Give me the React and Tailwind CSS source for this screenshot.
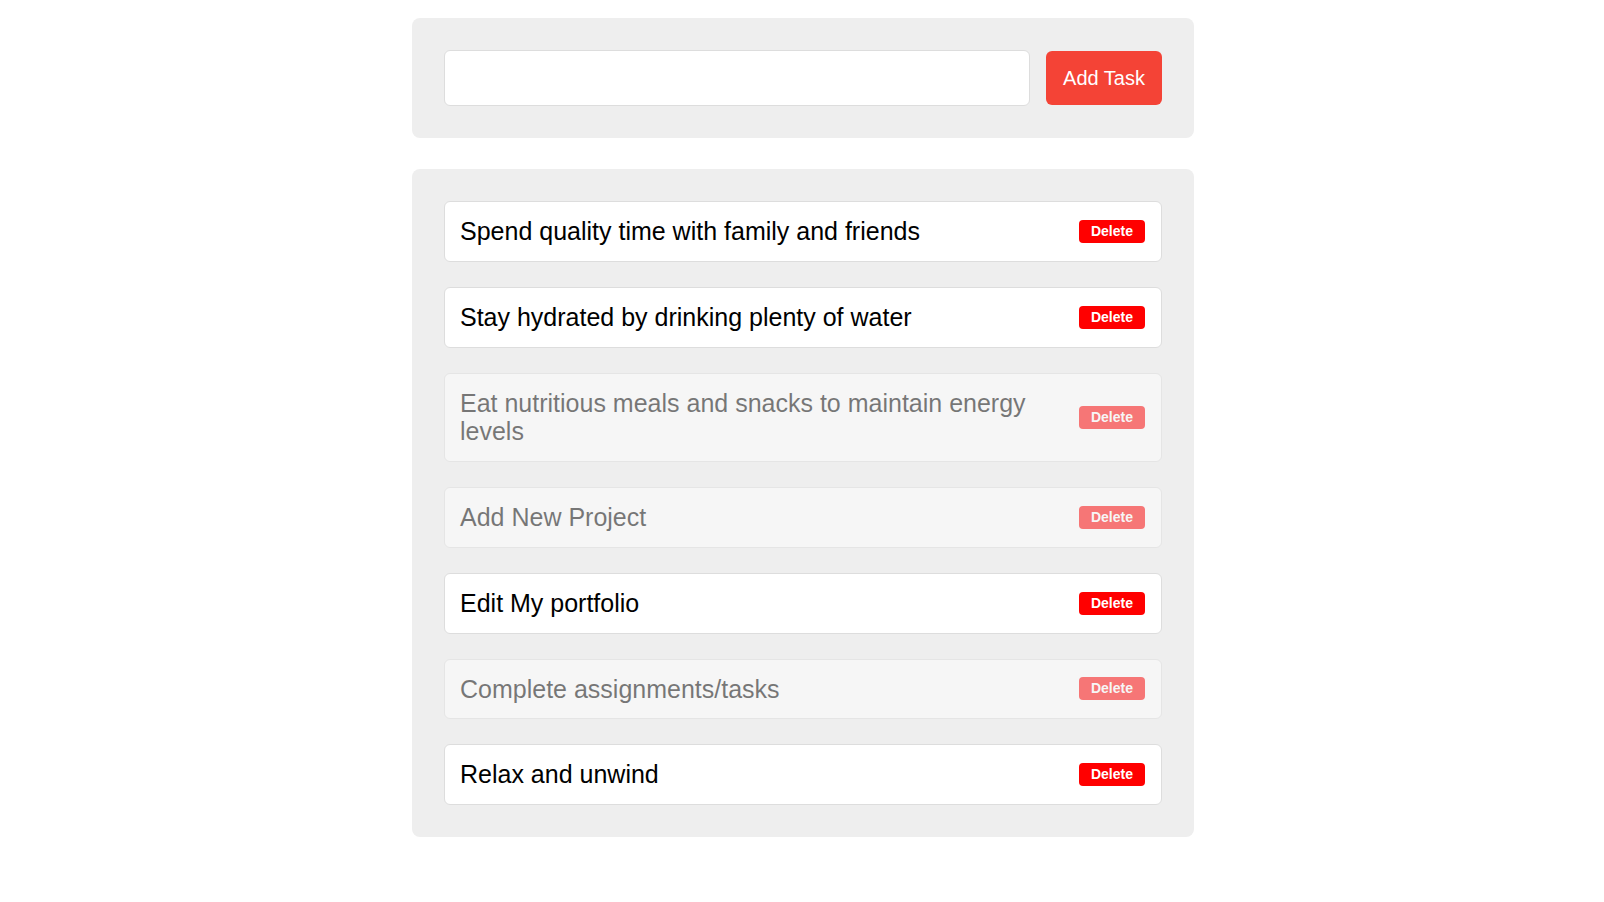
import React from "react";

const tasks = [
  { text: "Spend quality time with family and friends", done: false },
  { text: "Stay hydrated by drinking plenty of water", done: false },
  { text: "Eat nutritious meals and snacks to maintain energy levels", done: true },
  { text: "Add New Project", done: true },
  { text: "Edit My portfolio", done: false },
  { text: "Complete assignments/tasks", done: true },
  { text: "Relax and unwind", done: false },
];

export default function App() {
  return (
    <div
      className="min-h-screen bg-white flex flex-col items-center pt-[18px] pl-[2px]"
      style={{ fontFamily: '"Liberation Sans", Arial, sans-serif' }}
    >
      <div className="w-[782px] bg-[#eeeeee] rounded-[8px] p-8 flex items-center gap-4">
        <input
          type="text"
          className="flex-1 h-[56px] bg-white border border-[#dddddd] rounded-[6px] px-4 text-[20px] outline-none"
        />
        <button className="h-[54px] w-[116px] bg-[#f44336] text-white text-[20px] rounded-[6px]">
          Add Task
        </button>
      </div>

      <div className="w-[782px] bg-[#eeeeee] rounded-[8px] p-8 mt-[31px] flex flex-col gap-[25px]">
        {tasks.map((t, i) => (
          <div
            key={i}
            className={
              "bg-white border border-[#dddddd] rounded-[6px] py-[15px] pl-[15px] pr-4 flex items-center gap-4 " +
              (t.done ? "opacity-50" : "")
            }
          >
            <span className="flex-1 text-[25px] leading-[1.15] text-black">{t.text}</span>
            <button className="bg-[#ff0000] text-white font-bold text-[14px] leading-[17px] px-3 py-[3px] rounded-[4px]">
              Delete
            </button>
          </div>
        ))}
      </div>
    </div>
  );
}
